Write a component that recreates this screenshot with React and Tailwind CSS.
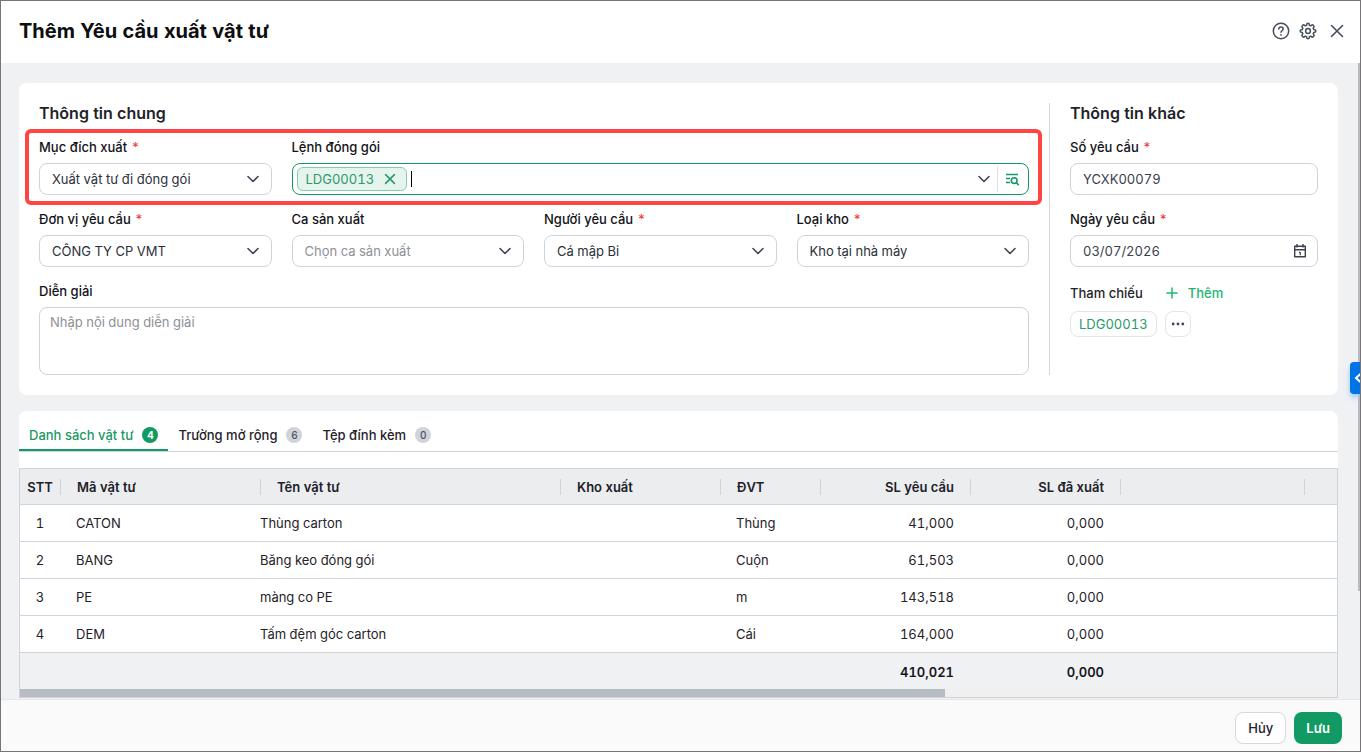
import React, { useState } from "react";

const materials = [
  { id: 1, code: "CATON", name: "Thùng carton", warehouse: "", unit: "Thùng", requested: "41,000", issued: "0,000" },
  { id: 2, code: "BANG", name: "Băng keo đóng gói", warehouse: "", unit: "Cuộn", requested: "61,503", issued: "0,000" },
  { id: 3, code: "PE", name: "màng co PE", warehouse: "", unit: "m", requested: "143,518", issued: "0,000" },
  { id: 4, code: "DEM", name: "Tấm đệm góc carton", warehouse: "", unit: "Cái", requested: "164,000", issued: "0,000" },
];

const tabs = [
  { id: "materials", label: "Danh sách vật tư", count: 4 },
  { id: "extra", label: "Trường mở rộng", count: 6 },
  { id: "files", label: "Tệp đính kèm", count: 0 },
];

const ChevronDown = ({ className = "" }) => (
  <svg
    className={`w-4 h-4 text-[#3f4654] ${className}`}
    viewBox="0 0 16 16"
    fill="none"
    stroke="currentColor"
    strokeWidth="1.6"
    strokeLinecap="round"
    strokeLinejoin="round"
    aria-hidden="true"
  >
    <path d="M3 5.5l5 5 5-5" />
  </svg>
);

const HelpIcon = () => (
  <svg className="w-5 h-5" viewBox="0 0 20 20" fill="none" stroke="currentColor" strokeWidth="1.5" strokeLinecap="round" aria-hidden="true">
    <circle cx="10" cy="10" r="7.7" />
    <path d="M7.8 8.1c0-1.4 1-2.2 2.200-2.200s2.200.8 2.200 2.100c0 1.500-2.200 1.600-2.200 3.300" />
    <circle cx="10" cy="13.800" r=".9" fill="currentColor" stroke="none" />
  </svg>
);

// Cog with eight rounded teeth
const GearIcon = () => (
  <svg className="w-[18px] h-[18px]" viewBox="0 0 24 24" fill="none" stroke="currentColor" strokeWidth="2" strokeLinejoin="round" aria-hidden="true">
    <path d="M10.300 3.200a1.700 1.700 0 0 1 3.400 0l.2 1.200 1.700.7 1-.7a1.700 1.700 0 0 1 2.400 0l.6.6a1.700 1.700 0 0 1 0 2.400l-.7 1 .7 1.700 1.200.2a1.700 1.700 0 0 1 0 3.400l-1.200.2-.7 1.700.7 1a1.700 1.700 0 0 1 0 2.400l-.6.6a1.700 1.700 0 0 1-2.400 0l-1-.7-1.700.7-.2 1.200a1.700 1.700 0 0 1-3.400 0l-.2-1.200-1.700-.7-1 .7a1.700 1.700 0 0 1-2.400 0l-.6-.6a1.700 1.700 0 0 1 0-2.400l.7-1-.7-1.700-1.200-.2a1.700 1.700 0 0 1 0-3.400l1.200-.2.7-1.700-.7-1a1.700 1.700 0 0 1 0-2.400l.6-.6a1.700 1.700 0 0 1 2.400 0l1 .7 1.700-.7z" />
    <circle cx="12" cy="12" r="3.200" />
  </svg>
);

const CloseIcon = ({ className = "w-5 h-5" }) => (
  <svg className={className} viewBox="0 0 20 20" fill="none" stroke="currentColor" strokeWidth="1.6" strokeLinecap="round" aria-hidden="true">
    <path d="M4.500 4.500l11 11M15.500 4.500l-11 11" />
  </svg>
);

const ListSearchIcon = () => (
  <svg className="w-4 h-4" viewBox="0 0 16 16" fill="none" stroke="currentColor" strokeWidth="1.6" aria-hidden="true">
    <path d="M2 3.500h12M2 7.500h4M2 11.500h4" />
    <circle cx="10.200" cy="9.600" r="2.900" />
    <path d="M12.300 11.700l2.400 2.400" />
  </svg>
);

const CalendarIcon = () => (
  <svg className="w-4 h-4" viewBox="0 0 16 16" fill="none" stroke="currentColor" strokeWidth="1.400" strokeLinejoin="round" aria-hidden="true">
    <path d="M2.700 3.200h10.600v10.600H2.700zM2.700 6.700h10.600M5 1v3.400M11 1v3.400" />
    <path d="M7 9.300h1.200v3" strokeWidth="1.200" />
  </svg>
);

const Label = ({ htmlFor, required, children }) => (
  <label htmlFor={htmlFor} className="block font-medium leading-4 mb-2 text-[#111318]">
    {children}
    {required && <span className="text-[#f24141] ml-1">*</span>}
  </label>
);

const SelectField = ({ id, label, required, value, placeholder }) => (
  <div>
    <Label htmlFor={id} required={required}>
      {label}
    </Label>
    <div className="relative">
      <select
        id={id}
        defaultValue={value || ""}
        className={`appearance-none block w-full h-8 pl-3 pr-8 border border-[#d0d3da] rounded-lg bg-white outline-none ${
          value ? "text-[#2b303b]" : "text-[#8d9096]"
        }`}
      >
        {placeholder && <option value="">{placeholder}</option>}
        {value && <option value={value}>{value}</option>}
      </select>
      <ChevronDown className="absolute right-[11px] top-2 pointer-events-none" />
    </div>
  </div>
);

const headCell = "relative h-9 pl-[17px] pr-4 font-semibold text-[#1d2027]";

const HeadDivider = () => (
  <span className="absolute -right-px top-[10px] h-4 w-px bg-[#d0d3d9]" />
);

const App = () => {
  const [activeTab, setActiveTab] = useState("materials");
  const [orders, setOrders] = useState(["LDG00013"]);

  return (
    <div className="relative h-screen flex flex-col overflow-hidden border border-[#777578] bg-[#f0f1f3] font-['Inter','Liberation_Sans',sans-serif] text-[13px] leading-5 tabular-nums text-[#1f2229]">
      {/* Header */}
      <header className="flex items-center justify-between h-[62px] shrink-0 pl-[18px] pr-[13px] pb-0.5 bg-white">
        <h1 className="text-xl font-bold text-[#0c0e12]">Thêm Yêu cầu xuất vật tư</h1>
        <div className="flex items-center text-[#454c5a]">
          <button type="button" aria-label="Trợ giúp" className="mr-2">
            <HelpIcon />
          </button>
          <button type="button" aria-label="Thiết lập" className="mr-[10px]">
            <GearIcon />
          </button>
          <button type="button" aria-label="Đóng">
            <CloseIcon />
          </button>
        </div>
      </header>

      <div className="flex-1 min-h-0 flex">
        <main className="flex-1 min-w-0 overflow-hidden pt-5 pl-[18px] pr-5">
          {/* General information */}
          <section className="flex bg-white rounded-lg p-5">
            <div className="flex-1 min-w-0 pr-5">
              <h2 className="text-base leading-5 font-semibold mb-4">Thông tin chung</h2>

              <div className="relative grid grid-cols-4 gap-x-5 mb-4">
                <SelectField id="purpose" label="Mục đích xuất" required value="Xuất vật tư đi đóng gói" />
                <div className="col-span-3">
                  <Label htmlFor="orders">Lệnh đóng gói</Label>
                  <div className="flex items-center h-8 pl-1 border border-[#119a63] rounded-lg">
                    {orders.map((order) => (
                      <span
                        key={order}
                        className="flex items-center h-6 px-2 gap-2 border border-[#87cbb0] rounded-md bg-[#e6f4ee] text-[#2a9a6a]"
                      >
                        {order}
                        <button type="button" aria-label={`Bỏ ${order}`} onClick={() => setOrders([])}>
                          <CloseIcon className="w-4 h-4 stroke-2" />
                        </button>
                      </span>
                    ))}
                    <span className="w-px h-4 ml-1 bg-black" />
                    <input id="orders" className="flex-1 min-w-0 outline-none" />
                    <button type="button" aria-label="Mở danh sách" className="mr-[5px]">
                      <ChevronDown />
                    </button>
                    <span className="w-px h-[26px] bg-[#dfe1e5]" />
                    <button type="button" aria-label="Tìm lệnh" className="pl-1.5 pr-2 text-[#119a63]">
                      <ListSearchIcon />
                    </button>
                  </div>
                </div>
                {/* Highlight frame */}
                <div className="absolute -top-[10px] -bottom-[10px] -left-[14px] -right-[13px] border-4 border-[#ff4444] rounded-md pointer-events-none" />
              </div>

              <div className="grid grid-cols-4 gap-x-5 mb-4">
                <SelectField id="department" label="Đơn vị yêu cầu" required value="CÔNG TY CP VMT" />
                <SelectField id="shift" label="Ca sản xuất" placeholder="Chọn ca sản xuất" />
                <SelectField id="requester" label="Người yêu cầu" required value="Cá mập Bi" />
                <SelectField id="warehouse" label="Loại kho" required value="Kho tại nhà máy" />
              </div>

              <Label htmlFor="note">Diễn giải</Label>
              <textarea
                id="note"
                placeholder="Nhập nội dung diễn giải"
                className="block w-full h-[68px] px-[10px] py-1 leading-5 border border-[#d0d3da] rounded-lg resize-none outline-none placeholder:text-[#8d9096]"
              />
            </div>

            <div className="w-[269px] shrink-0 pl-5 border-l border-[#d6d8dc]">
              <h2 className="text-base leading-5 font-semibold mb-4">Thông tin khác</h2>
              <div className="mb-4">
                <Label htmlFor="number" required>
                  Số yêu cầu
                </Label>
                <input
                  id="number"
                  defaultValue="YCXK00079"
                  className="block w-full h-8 px-3 border border-[#d0d3da] rounded-lg outline-none text-[#3a404d]"
                />
              </div>
              <div className="mb-4">
                <Label htmlFor="date" required>
                  Ngày yêu cầu
                </Label>
                <div className="flex items-center h-8 pl-3 pr-[9px] border border-[#d0d3da] rounded-lg text-[#3a404d]">
                  <input id="date" defaultValue="03/07/2026" className="flex-1 min-w-0 outline-none" />
                  <button type="button" aria-label="Chọn ngày">
                    <CalendarIcon />
                  </button>
                </div>
              </div>
              <div className="flex items-center h-5 mb-2 font-medium">
                <span>Tham chiếu</span>
                <button type="button" className="flex items-center gap-2 ml-[21px] text-[#21b573]">
                  <svg className="w-4 h-4" viewBox="0 0 16 16" fill="none" stroke="currentColor" strokeWidth="1.5" strokeLinecap="round" aria-hidden="true">
                    <path d="M8 3v10M3 8h10" />
                  </svg>
                  Thêm
                </button>
              </div>
              <div className="flex gap-2">
                <a href="#LDG00013" className="flex items-center h-[26px] px-2 border border-[#e4e5e9] rounded-lg text-[#2a9a6a]">
                  LDG00013
                </a>
                <button
                  type="button"
                  aria-label="Thêm tùy chọn"
                  className="flex items-center justify-center w-[26px] h-[26px] border border-[#e4e5e9] rounded-lg text-[#3f4654]"
                >
                  <svg className="w-4 h-4" viewBox="0 0 16 16" fill="currentColor" aria-hidden="true">
                    <circle cx="3.200" cy="8" r="1.400" />
                    <circle cx="8" cy="8" r="1.400" />
                    <circle cx="12.800" cy="8" r="1.400" />
                  </svg>
                </button>
              </div>
            </div>
          </section>

          {/* Materials */}
          <section className="mt-4 bg-white rounded-t-lg">
            <div role="tablist" className="flex h-[41px] border-b border-[#d0d3d9]">
              {tabs.map((tab) => (
                <button
                  key={tab.id}
                  type="button"
                  role="tab"
                  aria-selected={activeTab === tab.id}
                  onClick={() => setActiveTab(tab.id)}
                  className={`flex items-center gap-[9px] px-[10px] pt-[10px] font-medium border-b-2 ${
                    activeTab === tab.id ? "border-[#119a63] text-[#1a9864]" : "border-transparent"
                  }`}
                >
                  {tab.label}
                  <span
                    className={`flex items-center justify-center w-4 h-4 rounded-full text-[10px] ${
                      activeTab === tab.id ? "bg-[#119a63] text-white font-bold" : "bg-[#d0d3da] text-[#4c5361]"
                    }`}
                  >
                    {tab.count}
                  </span>
                </button>
              ))}
            </div>

            <div className="mt-4 border border-[#d0d3d9] bg-[#f0f1f3]">
              <table className="w-full table-fixed border-separate border-spacing-0">
                <colgroup>
                  <col className="w-[40px]" />
                  <col className="w-[200px]" />
                  <col className="w-[300px]" />
                  <col className="w-[160px]" />
                  <col className="w-[100px]" />
                  <col className="w-[150px]" />
                  <col className="w-[150px]" />
                  <col />
                  <col className="w-[33px]" />
                </colgroup>
                <thead className="bg-[#ebedef] text-left [&_th]:border-b [&_th]:border-[#d0d3d9]">
                  <tr>
                    <th className="relative h-9 font-semibold text-[#1d2027] text-center">
                      STT
                      <HeadDivider />
                    </th>
                    <th className={headCell}>
                      Mã vật tư
                      <HeadDivider />
                    </th>
                    <th className={headCell}>
                      Tên vật tư
                      <HeadDivider />
                    </th>
                    <th className={headCell}>
                      Kho xuất
                      <HeadDivider />
                    </th>
                    <th className={headCell}>
                      ĐVT
                      <HeadDivider />
                    </th>
                    <th className={`${headCell} text-right`}>
                      SL yêu cầu
                      <HeadDivider />
                    </th>
                    <th className={`${headCell} text-right`}>
                      SL đã xuất
                      <HeadDivider />
                    </th>
                    <th className={headCell}>
                      <HeadDivider />
                    </th>
                    <th></th>
                  </tr>
                </thead>
                <tbody className="bg-white [&_td]:h-[37px] [&_td]:border-b [&_td]:border-[#d0d3d9]">
                  {materials.map((item) => (
                    <tr key={item.id}>
                      <td className="text-center">{item.id}</td>
                      <td className="px-4">{item.code}</td>
                      <td>{item.name}</td>
                      <td className="px-4">{item.warehouse}</td>
                      <td className="px-4">{item.unit}</td>
                      <td className="px-4 text-right">{item.requested}</td>
                      <td className="px-4 text-right">{item.issued}</td>
                      <td></td>
                      <td></td>
                    </tr>
                  ))}
                </tbody>
                <tfoot className="font-semibold text-right text-[#14161c]">
                  <tr>
                    <td colSpan={5} className="h-9"></td>
                    <td className="px-4 pt-0.5">410,021</td>
                    <td className="px-4 pt-0.5">0,000</td>
                    <td></td>
                    <td></td>
                  </tr>
                </tfoot>
              </table>
              {/* Horizontal scrollbar */}
              <div className="h-2 bg-[#f0f0f0]">
                <div className="h-full w-26/37 bg-[#b7bbc2]" />
              </div>
            </div>
          </section>
        </main>

        {/* Vertical scrollbar */}
        <div className="w-0.5 shrink-0">
          <div className="h-[83%] bg-[#b7bbc2]" />
        </div>
      </div>

      <footer className="flex justify-end gap-2 shrink-0 pt-3 pb-[7px] pr-[18px] border-t border-[#e6e7ea] bg-[#fafafa]">
        <button type="button" className="h-8 px-3 border border-[#d6d8dc] rounded-lg bg-white font-medium">
          Hủy
        </button>
        <button type="button" className="h-8 px-3 rounded-lg bg-[#119a63] text-white font-semibold">
          Lưu
        </button>
      </footer>

      <button
        type="button"
        aria-label="Mở bảng bên"
        className="absolute right-0 top-[361px] w-[10px] h-8 overflow-hidden rounded-l bg-[#0073e6] text-white shadow-md shadow-blue-300"
      >
        <svg className="w-4 h-4 max-w-none" viewBox="0 0 16 16" fill="none" stroke="currentColor" strokeWidth="2" aria-hidden="true">
          <path d="M11 3.500L6 8l5 4.500" />
        </svg>
      </button>
    </div>
  );
};

export default App;
